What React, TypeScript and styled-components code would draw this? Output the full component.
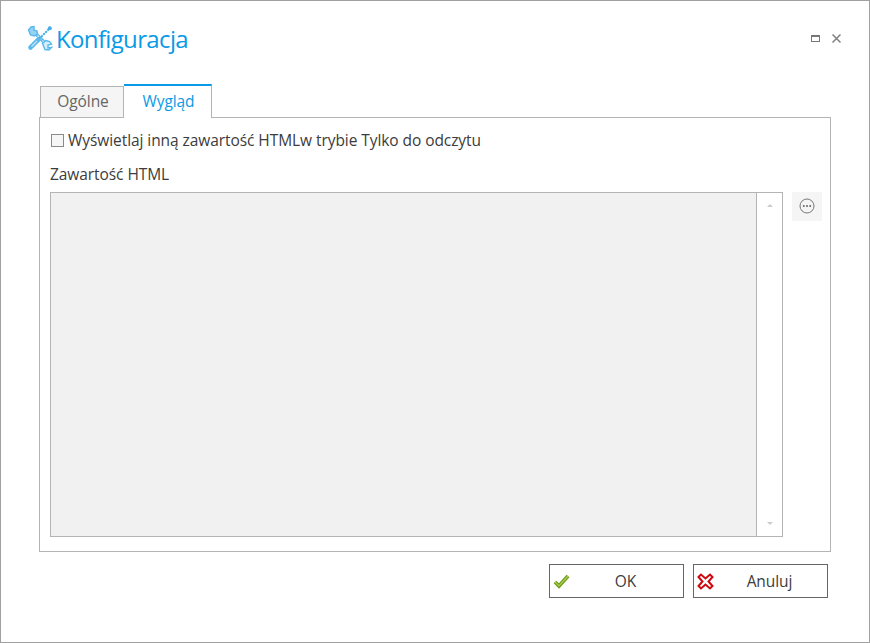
import styled, { createGlobalStyle } from "styled-components";

const GlobalStyle = createGlobalStyle`
  html, body {
    margin: 0;
    padding: 0;
    background: #fff;
  }
  body {
    font-family: "Open Sans", "Noto Sans", sans-serif;
  }
`;

function ToolsIcon() {
  return (
    <svg width="26" height="26" viewBox="0 0 26 26" fill="none">
      {/* wrench shaft */}
      <path d="M8 8 L19 19" stroke="#5ab8ec" strokeWidth="3.4" />
      <path d="M8 8 L19 19" stroke="#d4eefb" strokeWidth="1.2" strokeDasharray="2 1.5" />
      {/* screwdriver shaft */}
      <path d="M22 4 L11 15" stroke="#45ade8" strokeWidth="2" strokeDasharray="2.2 0.8" />
      {/* screwdriver handle */}
      <path d="M11 15 L3.5 22.5" stroke="#5ab8ec" strokeWidth="4.6" strokeLinecap="round" strokeDasharray="2.6 0.8" />
      <path d="M10 16 L4.5 21.5" stroke="#bfe5f9" strokeWidth="1.2" />
      {/* wrench heads */}
      <path d="M1.5 5 L4 2 L7 1.5 L7 5 L10 6 L10.5 9 L7.5 11 L3.5 10 Z" fill="#93d2f4" stroke="#5ab8ec" strokeWidth="1.4" />
      <path d="M15.5 18.5 L19 15.5 L22.5 16.5 L24.5 19 L21 20 L21 23 L24.5 22.5 L22 25 L18 24.5 Z" fill="#d4eefb" stroke="#5ab8ec" strokeWidth="1.4" />
      <circle cx="22.8" cy="3.2" r="2" fill="#45ade8" />
    </svg>
  );
}

function MoreIcon() {
  return (
    <svg width="16" height="16" viewBox="0 0 16 16" fill="none">
      <circle cx="8" cy="8" r="7" stroke="#777" strokeWidth="1" />
      <circle cx="4.8" cy="8" r="1" fill="#666" />
      <circle cx="8" cy="8" r="1" fill="#666" />
      <circle cx="11.2" cy="8" r="1" fill="#666" />
    </svg>
  );
}

function CheckIcon() {
  return (
    <svg width="17" height="16" viewBox="0 0 17 16" fill="none">
      <path d="M2 9 L6 13 L15 3" stroke="#6f9e12" strokeWidth="3.8" />
      <path d="M2 9 L6 13 L15 3" stroke="#a9cf5a" strokeWidth="1.2" />
    </svg>
  );
}

function CrossIcon() {
  return (
    <svg width="17" height="17" viewBox="0 0 17 17" fill="none">
      <path
        d="M1.5 4 L4 1.5 L8.5 5.5 L13 1.5 L15.5 4 L11.5 8.5 L15.5 13 L13 15.5 L8.5 11.5 L4 15.5 L1.5 13 L5.5 8.5 Z"
        fill="#fff"
        stroke="#d0080f"
        strokeWidth="2"
      />
    </svg>
  );
}

export default function App() {
  return (
    <>
      <GlobalStyle />
      <Dialog>
        <Header>
          <Title>
            <ToolsIcon />
            <TitleText>Konfiguracja</TitleText>
          </Title>
          <WindowControls>
            <MaximizeBox />
            <CloseGlyph viewBox="0 0 9 9">
              <path d="M0.5 0.5 L8.5 8.5 M8.5 0.5 L0.5 8.5" stroke="#808080" strokeWidth="1.5" />
            </CloseGlyph>
          </WindowControls>
        </Header>

        <Tabs>
          <Tab>Ogólne</Tab>
          <Tab $active>Wygląd</Tab>
        </Tabs>

        <Panel>
          <CheckRow>
            <Checkbox />
            <span>Wyświetlaj inną zawartość HTMLw trybie Tylko do odczytu</span>
          </CheckRow>
          <FieldLabel>Zawartość HTML</FieldLabel>
          <EditorRow>
            <Editor>
              <EditorArea />
              <Scrollbar>
                <Arrow $up />
                <Arrow />
              </Scrollbar>
            </Editor>
            <MoreButton>
              <MoreIcon />
            </MoreButton>
          </EditorRow>
        </Panel>

        <Footer>
          <ActionButton>
            <CheckIcon />
            <ButtonLabel>OK</ButtonLabel>
          </ActionButton>
          <ActionButton>
            <CrossIcon />
            <ButtonLabel>Anuluj</ButtonLabel>
          </ActionButton>
        </Footer>
      </Dialog>
    </>
  );
}

const Dialog = styled.div`
  width: 870px;
  height: 643px;
  box-sizing: border-box;
  border: 1px solid #a0a0a0;
  padding: 0 38px 0 38px;
  background: #fff;
  overflow: hidden;
`;

const Header = styled.div`
  display: flex;
  justify-content: space-between;
  align-items: center;
  height: 83px;
  margin-left: -12px;
  margin-right: -10px;
  padding-bottom: 9px;
  box-sizing: border-box;
`;

const Title = styled.div`
  display: flex;
  align-items: center;
  gap: 3px;
`;

const TitleText = styled.span`
  font-size: 24px;
  letter-spacing: -0.65px;
  color: #0a9ae6;
`;

const WindowControls = styled.div`
  display: flex;
  align-items: center;
  gap: 12px;
  margin-top: 1px;
`;

const MaximizeBox = styled.div`
  width: 9px;
  height: 7px;
  box-sizing: border-box;
  border: 1px solid #777;
  border-top-width: 2px;
`;

const CloseGlyph = styled.svg`
  width: 9px;
  height: 9px;
`;

const Tabs = styled.div`
  display: flex;
  align-items: flex-end;
  height: 34px;
  margin-left: 1px;
  position: relative;
  z-index: 1;
  margin-bottom: -1px;
`;

const Tab = styled.div<{ $active?: boolean }>`
  box-sizing: border-box;
  display: flex;
  align-items: center;
  justify-content: center;
  width: ${(p) => (p.$active ? "88px" : "84px")};
  height: ${(p) => (p.$active ? "34px" : "32px")};
  padding: 0 0 2px 2px;
  font-size: 15.5px;
  letter-spacing: -0.07px;
  color: ${(p) => (p.$active ? "#0a9ae6" : "#666")};
  background: ${(p) => (p.$active ? "#fff" : "#f5f5f5")};
  border: 1px solid #b4b4b4;
  border-top: ${(p) => (p.$active ? "2px solid #0a9ae6" : "1px solid #b4b4b4")};
  border-left: ${(p) => (p.$active ? "none" : "1px solid #b4b4b4")};
  border-bottom: ${(p) => (p.$active ? "none" : "1px solid #b4b4b4")};
`;

const Panel = styled.div`
  box-sizing: border-box;
  width: 792px;
  height: 435px;
  border: 1px solid #b4b4b4;
  padding: 12px 8px 0 10px;
  color: #444;
`;

const CheckRow = styled.div`
  display: flex;
  align-items: center;
  gap: 4px;
  height: 20px;
  font-size: 15.5px;
  letter-spacing: -0.07px;
  color: #3c3c3c;
`;

const Checkbox = styled.div`
  width: 13px;
  height: 13px;
  box-sizing: border-box;
  border: 1px solid #8a8a8a;
  background: #f6f6f6;
  margin-left: 1px;
`;

const FieldLabel = styled.div`
  margin-top: 14px;
  height: 20px;
  line-height: 20px;
  font-size: 15.5px;
  letter-spacing: -0.07px;
  color: #3c3c3c;
`;

const EditorRow = styled.div`
  display: flex;
  gap: 9px;
  margin-top: 8px;
`;

const Editor = styled.div`
  display: flex;
  box-sizing: border-box;
  width: 733px;
  height: 345px;
  border: 1px solid #b4b4b4;
`;

const EditorArea = styled.div`
  flex: 1;
  background: #f1f1f1;
  border-right: 1px solid #b4b4b4;
`;

const Scrollbar = styled.div`
  width: 25px;
  display: flex;
  flex-direction: column;
  justify-content: space-between;
  align-items: center;
  padding: 11px 0;
  box-sizing: border-box;
`;

const Arrow = styled.div<{ $up?: boolean }>`
  width: 0;
  height: 0;
  border-left: 3px solid transparent;
  border-right: 3px solid transparent;
  border-bottom: ${(p) => (p.$up ? "3px solid #ccc" : "none")};
  border-top: ${(p) => (p.$up ? "none" : "3px solid #ccc")};
`;

const MoreButton = styled.div`
  width: 30px;
  height: 29px;
  padding: 0 1px 2px 0;
  box-sizing: border-box;
  background: #f5f5f5;
  display: flex;
  align-items: center;
  justify-content: center;
`;

const Footer = styled.div`
  display: flex;
  justify-content: flex-end;
  gap: 9px;
  width: 789px;
  margin-top: 12px;
`;

const ActionButton = styled.div`
  box-sizing: border-box;
  width: 135px;
  height: 34px;
  border: 1px solid #666;
  display: flex;
  align-items: center;
  padding-left: 3px;
  background: #fff;
`;

const ButtonLabel = styled.span`
  flex: 1;
  text-align: center;
  font-size: 15.5px;
  letter-spacing: -0.07px;
  color: #3c3c3c;
  padding-right: 2px;
  padding-bottom: 1px;
`;
